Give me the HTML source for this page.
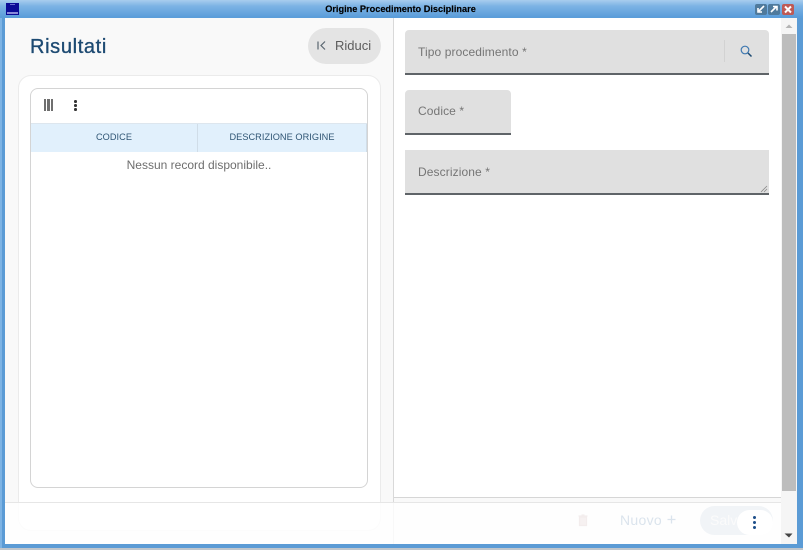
<!DOCTYPE html>
<html>
<head>
<meta charset="utf-8">
<style>
html,body{margin:0;padding:0;width:803px;height:550px;overflow:hidden;background:#c0c6cc;font-family:"Liberation Sans",sans-serif;}
div{position:absolute;box-sizing:border-box;}
#w{left:0;top:0;width:803px;height:550px;background:#c0c6cc;overflow:hidden;filter:blur(.3px);}
.t{white-space:nowrap;}
.field{background:#e0e0e0;border-bottom:2px solid #5f6468;border-radius:4px 4px 0 0;}
.lab{color:#757575;font-size:12px;letter-spacing:.1px;line-height:16px;}
</style>
</head>
<body>
<div id="w">
<!-- window frame -->
<div style="left:0;top:0;width:803px;height:548px;background:#5b9bd5;"></div>
<div style="left:0;top:0;width:803px;height:18px;background:linear-gradient(#a9cdee 0,#7db3e4 6px,#5b9dd9 17px);"></div>
<div style="left:0;top:18px;width:2px;height:530px;background:#7db3e4;"></div>
<!-- app icon -->
<div style="left:6px;top:3px;width:13px;height:12px;background:#0a0a96;"></div>
<div style="left:10px;top:4px;width:5px;height:1px;background:#6b6bd0;"></div>
<div style="left:7px;top:12px;width:11px;height:2px;background:#8a8ad8;"></div>
<!-- title -->
<div class="t" style="left:0;top:3px;width:801px;text-align:center;font-size:9.2px;font-weight:bold;line-height:13px;color:#000;-webkit-text-stroke:.15px #000;">Origine Procedimento Disciplinare</div>
<!-- window buttons -->
<div style="left:755px;top:4px;width:12px;height:11px;background:#4f7a9c;border-radius:2px;"></div>
<svg style="position:absolute;left:755px;top:4px" width="12" height="11"><path d="M9 2L4 7M3 4v4h4" stroke="#fff" stroke-width="1.6" fill="none"/></svg>
<div style="left:768px;top:4px;width:12px;height:11px;background:#4f7a9c;border-radius:2px;"></div>
<svg style="position:absolute;left:768px;top:4px" width="12" height="11"><path d="M3 8L8 3M5 2.500h4v4" stroke="#fff" stroke-width="1.600" fill="none"/></svg>
<div style="left:782px;top:4px;width:12px;height:11px;background:#bf5a55;border-radius:2px;"></div>
<svg style="position:absolute;left:782px;top:4px" width="12" height="11"><path d="M3 2.500L9 8.500M9 2.500L3 8.500" stroke="#fff" stroke-width="2" fill="none"/></svg>

<!-- content -->
<div style="left:5px;top:18px;width:792px;height:526px;background:#fff;"></div>
<!-- left panel -->
<div style="left:5px;top:18px;width:389px;height:526px;background:#f9f9f9;border-right:1px solid #d9d9d9;"></div>
<div class="t" style="left:30px;top:35px;font-size:20px;line-height:24px;letter-spacing:.65px;color:#1d4a72;-webkit-text-stroke:.35px #1d4a72;">Risultati</div>
<div style="left:308px;top:28px;width:73px;height:36px;border-radius:18px;background:#e4e4e4;"></div>
<svg style="position:absolute;left:316px;top:40px" width="12" height="12"><path d="M2 1.500v8M9 1.500L5 5.500l4 4" stroke="#5a6670" stroke-width="1.200" fill="none"/></svg>
<div class="t" style="left:335px;top:38px;font-size:13px;line-height:16px;color:#5c5c5c;">Riduci</div>

<!-- card -->
<div style="left:18px;top:75px;width:363px;height:456px;background:#fff;border:1px solid #ebebeb;border-radius:13px;"></div>
<!-- table -->
<div style="left:30px;top:88px;width:338px;height:400px;background:#fff;border:1px solid #d4d4d4;border-radius:8px;"></div>
<div style="left:43.500px;top:99px;width:2.500px;height:12px;background:#6f6f6f;"></div>
<div style="left:47px;top:99px;width:2.500px;height:12px;background:#6f6f6f;"></div>
<div style="left:50.500px;top:99px;width:2.500px;height:12px;background:#6f6f6f;"></div>
<div style="left:74px;top:100px;width:2.500px;height:2.500px;border-radius:50%;background:#333;"></div>
<div style="left:74px;top:104px;width:2.500px;height:2.500px;border-radius:50%;background:#333;"></div>
<div style="left:74px;top:108px;width:2.500px;height:2.500px;border-radius:50%;background:#333;"></div>
<div style="left:31px;top:123px;width:336px;height:29px;background:#e1f0fc;border-top:1px solid #dde6ee;"></div>
<div style="left:197px;top:124px;width:1px;height:28px;background:#d0dde8;"></div>
<div style="left:366px;top:124px;width:1px;height:28px;background:#d0dde8;"></div>
<div class="t" style="left:31px;top:131px;width:166px;text-align:center;font-size:9.2px;line-height:13px;letter-spacing:.05px;color:#2f5574;">CODICE</div>
<div class="t" style="left:198px;top:131px;width:168px;text-align:center;font-size:9.2px;line-height:13px;letter-spacing:.05px;color:#2f5574;">DESCRIZIONE ORIGINE</div>
<div class="t" style="left:31px;top:158px;width:336px;text-align:center;font-size:12px;line-height:15px;color:#6e6e6e;">Nessun record disponibile..</div>

<!-- right form -->
<div class="field" style="left:405px;top:30px;width:363.500px;height:45px;"></div>
<div class="t lab" style="left:418px;top:43.500px;">Tipo procedimento *</div>
<div style="left:724px;top:40px;width:1px;height:22px;background:#d2d2d2;"></div>
<svg style="position:absolute;left:739px;top:44px" width="14" height="14"><circle cx="6" cy="6" r="3.800" stroke="#3f78b0" stroke-width="1.200" fill="none"/><path d="M9 9l3.500 3.500" stroke="#1d4a72" stroke-width="1.500"/></svg>
<div class="field" style="left:405px;top:90px;width:106px;height:45px;"></div>
<div class="t lab" style="left:418px;top:103px;">Codice *</div>
<div class="field" style="left:405px;top:150px;width:363.500px;height:45px;border-radius:0;"></div>
<div class="t lab" style="left:418px;top:164px;">Descrizione *</div>
<svg style="position:absolute;left:760px;top:185px" width="8" height="8"><path d="M1 7L7 1M4 7L7 4" stroke="#8a8a8a" stroke-width=".8"/></svg>

<!-- right footer line -->
<div style="left:394px;top:497px;width:387px;height:1px;background:#d6d6d6;"></div>
<div style="left:394px;top:498px;width:387px;height:46px;background:#f9f9f9;"></div>

<!-- scrollbar -->
<div style="left:781px;top:18px;width:16px;height:526px;background:#f5f5f5;"></div>
<svg style="position:absolute;left:781px;top:18px" width="16" height="16"><path d="M4.500 10L8 6.500 11.500 10z" fill="#b4b4b4"/></svg>
<div style="left:782px;top:34px;width:14px;height:457px;background:#bdbdbd;"></div>
<svg style="position:absolute;left:781px;top:527px" width="16" height="16"><path d="M3.500 6.500h8L8 10.500z" fill="#444"/></svg>

<!-- footer overlay -->
<div style="left:5px;top:502px;width:776px;height:42px;background:rgba(255,255,255,.82);border-top:1px solid #e6e6e6;"></div>
<svg style="position:absolute;left:577px;top:514px" width="12" height="13"><path d="M2.500 3h7v8.500h-7zM1.500 2h9M4.500 1h3" stroke="#f3eded" stroke-width="1.200" fill="#f6f1f1"/></svg>
<div class="t" style="left:620px;top:512px;font-size:14px;line-height:17px;letter-spacing:.3px;color:#dbe4ed;">Nuovo</div>
<svg style="position:absolute;left:666px;top:514px" width="11" height="11"><path d="M5.500 1.500v8M1.500 5.500h8" stroke="#dbe4ed" stroke-width="1.300" fill="none"/></svg>
<div style="left:700px;top:506px;width:73px;height:29px;border-radius:15px;background:#f1f4f7;"></div>
<div class="t" style="left:710px;top:512px;font-size:14px;line-height:17px;color:#fbfbfb;">Salva</div>
<div style="left:737px;top:510px;width:36px;height:25px;border-radius:13px;background:#fff;"></div>
<div style="left:753px;top:516px;width:3px;height:3px;border-radius:50%;background:#1d4f8a;"></div>
<div style="left:753px;top:521px;width:3px;height:3px;border-radius:50%;background:#1d4f8a;"></div>
<div style="left:753px;top:526px;width:3px;height:3px;border-radius:50%;background:#1d4f8a;"></div>
</div>
</body>
</html>
